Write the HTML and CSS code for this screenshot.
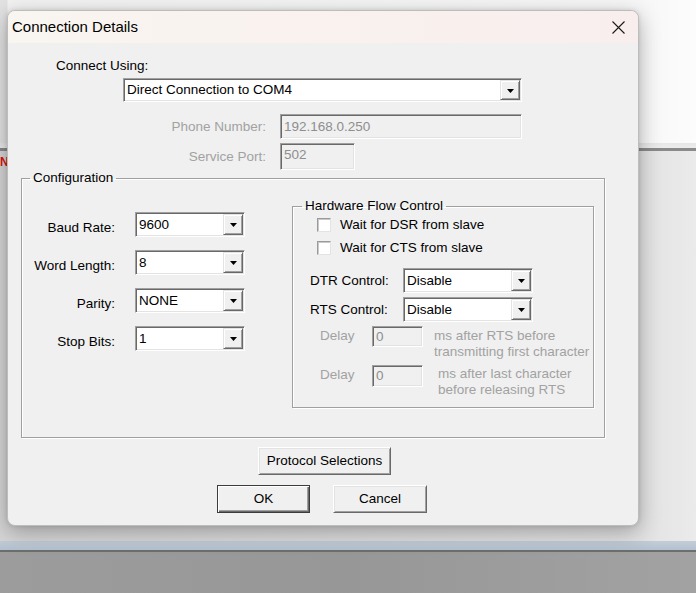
FILE: index.html
```html
<!DOCTYPE html>
<html lang="en">
<head>
<meta charset="utf-8">
<title>Connection Details</title>
<link rel="stylesheet" href="styles.css">
</head>
<body>
<div class="desktop">
  <div class="desk-top"></div>
  <div class="desk-rule-light"></div>
  <div class="desk-rule"></div>
  <div class="desk-mid"><span class="red-n">N</span></div>
  <div class="band"></div>
  <div class="band-rule"></div>
  <div class="desk-bottom"></div>
</div>

<div class="dialog">
  <div class="titlebar">
    <span class="title">Connection Details</span>
    <svg class="close" width="13" height="13" viewBox="0 0 13 13"><path d="M0.5 0.5 L12.5 12.5 M12.5 0.5 L0.5 12.5" stroke="#1a1a1a" stroke-width="1.1" fill="none"/></svg>
  </div>
  <div class="body">
    <div class="connect-label">Connect Using:</div>
    <div class="combo combo-connect">
      <span class="combo-text">Direct Connection to COM4</span>
      <span class="drop"><svg width="7" height="4" viewBox="0 0 7 4"><polygon points="0,0 7,0 3.5,4" fill="#000"/></svg></span>
    </div>

    <div class="field-row row-phone">
      <span class="field-label">Phone Number:</span>
      <div class="edit edit-phone">192.168.0.250</div>
    </div>
    <div class="field-row row-port">
      <span class="field-label">Service Port:</span>
      <div class="edit edit-port">502</div>
    </div>

    <fieldset class="group config">
      <legend>Configuration</legend>
      <div class="config-cols">
        <div class="serial-col">
          <div class="serial-row">
            <span class="serial-label">Baud Rate:</span>
            <div class="combo combo-serial"><span class="combo-text">9600</span><span class="drop"><svg width="7" height="4" viewBox="0 0 7 4"><polygon points="0,0 7,0 3.5,4" fill="#000"/></svg></span></div>
          </div>
          <div class="serial-row">
            <span class="serial-label">Word Length:</span>
            <div class="combo combo-serial"><span class="combo-text">8</span><span class="drop"><svg width="7" height="4" viewBox="0 0 7 4"><polygon points="0,0 7,0 3.5,4" fill="#000"/></svg></span></div>
          </div>
          <div class="serial-row">
            <span class="serial-label">Parity:</span>
            <div class="combo combo-serial"><span class="combo-text">NONE</span><span class="drop"><svg width="7" height="4" viewBox="0 0 7 4"><polygon points="0,0 7,0 3.5,4" fill="#000"/></svg></span></div>
          </div>
          <div class="serial-row">
            <span class="serial-label">Stop Bits:</span>
            <div class="combo combo-serial"><span class="combo-text">1</span><span class="drop"><svg width="7" height="4" viewBox="0 0 7 4"><polygon points="0,0 7,0 3.5,4" fill="#000"/></svg></span></div>
          </div>
        </div>

        <fieldset class="group hw">
          <legend>Hardware Flow Control</legend>
          <div class="check check-1"><span class="box"></span><span>Wait for DSR from slave</span></div>
          <div class="check check-2"><span class="box"></span><span>Wait for CTS from slave</span></div>

          <div class="ctl-row ctl-dtr">
            <span class="ctl-label">DTR Control:</span>
            <div class="combo combo-ctl"><span class="combo-text">Disable</span><span class="drop"><svg width="7" height="4" viewBox="0 0 7 4"><polygon points="0,0 7,0 3.5,4" fill="#000"/></svg></span></div>
          </div>
          <div class="ctl-row ctl-rts">
            <span class="ctl-label">RTS Control:</span>
            <div class="combo combo-ctl"><span class="combo-text">Disable</span><span class="drop"><svg width="7" height="4" viewBox="0 0 7 4"><polygon points="0,0 7,0 3.5,4" fill="#000"/></svg></span></div>
          </div>

          <div class="delay-row delay-1">
            <span class="delay-label">Delay</span>
            <div class="edit edit-delay">0</div>
            <div class="delay-text">ms after RTS before<br>transmitting first character</div>
          </div>
          <div class="delay-row delay-2">
            <span class="delay-label">Delay</span>
            <div class="edit edit-delay edit-delay-2">0</div>
            <div class="delay-text">ms after last character<br>before releasing RTS</div>
          </div>
        </fieldset>
      </div>
    </fieldset>

    <div class="btn-row row-protocol">
      <button class="btn btn-protocol" type="button">Protocol Selections</button>
    </div>
    <div class="btn-row row-ok">
      <button class="btn btn-ok" type="button">OK</button>
      <button class="btn btn-cancel" type="button">Cancel</button>
    </div>
  </div>
</div>
</body>
</html>
```

FILE: styles.css
```css
* { box-sizing: border-box; }

html, body {
  margin: 0;
  padding: 0;
  width: 696px;
  height: 593px;
  overflow: hidden;
}

body {
  font-family: "Liberation Sans", Arial, sans-serif;
  font-size: 13.5px;
  color: #000;
  background: #e8e8e8;
  position: relative;
}

/* ---------- desktop behind the dialog ---------- */
.desktop {
  display: flex;
  flex-direction: column;
  width: 696px;
  height: 593px;
}
.desk-top {
  height: 143px;
  background: linear-gradient(to right, #e2e2e2 0, #e2e2e2 7px, #f2f2f2 8px, #f7f7f7 640px, #fcfcfc 696px);
}
.desk-rule-light {
  height: 5px;
  background: linear-gradient(to bottom, #e6e6e6, #ededed);
}
.desk-rule {
  height: 3px;
  background: #8a8a8a;
}
.desk-mid {
  height: 390px;
  background: linear-gradient(to right, #d6d6d6 0, #d6d6d6 7px, #e2e2e2 640px, #ebebeb 696px);
  overflow: hidden;
}
.red-n {
  display: block;
  margin: 4px 0 0 0;
  font-family: "Liberation Sans", Arial, sans-serif;
  font-weight: bold;
  font-size: 12px;
  line-height: 14px;
  color: #e01010;
}
.band {
  height: 9px;
  background: linear-gradient(to bottom, #c3cdd8, #b4c1ce);
}
.band-rule {
  height: 2px;
  background: #6e6e6e;
}
.desk-bottom {
  flex: 1;
  background: linear-gradient(to right, #9c9c9c, #979797 50%, #a2a2a2);
}

/* ---------- dialog window ---------- */
.dialog {
  position: absolute;
  left: 7px;
  top: 10px;
  width: 632px;
  height: 516px;
  border: 1px solid #bdbdbd;
  border-radius: 8px;
  background: #f0f0f0;
  overflow: hidden;
  box-shadow: 0 6px 22px rgba(0, 0, 0, 0.3), 0 0 4px rgba(0, 0, 0, 0.12);
}

.titlebar {
  height: 32px;
  display: flex;
  align-items: center;
  justify-content: space-between;
  padding: 0 13px 0 4px;
  background: linear-gradient(to right, #f9f5f0, #f9f1ee 60%, #f8eeee);
}
.title {
  font-family: "Liberation Sans", Arial, sans-serif;
  font-size: 15px;
  line-height: 20px;
  color: #000;
}
.close { display: block; }

.body {
  height: 482px;
  white-space: nowrap;
}

/* ---------- classic 3D controls ---------- */
.combo,
.edit {
  border-style: solid;
  border-width: 1px;
  border-color: #a0a0a0 #ffffff #ffffff #a0a0a0;
  box-shadow: inset 1px 1px 0 #696969, inset -1px -1px 0 #e3e3e3;
}

.combo {
  display: flex;
  padding: 1px;
  background: #fff;
}
.combo-text {
  flex: 1;
  display: flex;
  align-items: center;
  padding-left: 2px;
  line-height: 18px;
}
.drop {
  width: 20px;
  display: flex;
  align-items: center;
  justify-content: center;
  background: #f0f0f0;
  border-style: solid;
  border-width: 1px;
  border-color: #e3e3e3 #696969 #696969 #e3e3e3;
  box-shadow: inset 1px 1px 0 #ffffff, inset -1px -1px 0 #a0a0a0;
}
.drop svg { display: block; margin-top: 1px; }

.edit {
  background: #f0f0f0;
  color: #8e8e8e;
  display: flex;
  align-items: center;
  padding-left: 3px;
  line-height: 18px;
}

/* ---------- top section ---------- */
.connect-label {
  margin: 14px 0 0 48px;
  line-height: 18px;
}
.combo-connect {
  margin: 3px 0 0 115px;
  width: 399px;
  height: 24px;
}
.field-row {
  display: flex;
  align-items: center;
}
.field-label {
  width: 258px;
  margin-right: 14px;
  text-align: right;
  color: #a2a2a2;
  line-height: 18px;
}
.row-phone { margin-top: 12px; }
.edit-phone { width: 242px; height: 25px; }
.row-port { margin-top: 4px; }
.edit-port {
  width: 75px;
  height: 27px;
  align-items: flex-start;
  padding-top: 2px;
}

/* ---------- group boxes ---------- */
.group {
  margin: 0;
  padding: 0;
  border: 1px solid #a0a0a0;
  box-shadow: 1px 1px 0 #ffffff, inset 1px 1px 0 #ffffff;
  min-width: 0;
}
.group > legend {
  padding: 0 3px;
  line-height: 16px;
  color: #000;
}

.config {
  margin-left: 13px;
  width: 584px;
  height: 268px;
}
.config > legend { margin-left: 8px; }

.config-cols {
  display: flex;
  align-items: flex-start;
}

.serial-col {
  margin-top: 26px;
  display: flex;
  flex-direction: column;
  gap: 13px;
}
.serial-row {
  display: flex;
  align-items: center;
}
.serial-label {
  width: 93px;
  margin-right: 20px;
  text-align: right;
  line-height: 18px;
  padding-top: 6px;
}
.combo-serial { width: 110px; height: 25px; }

.hw {
  margin: 12px 0 0 47px;
  width: 302px;
  height: 210px;
}
.hw > legend { margin-left: 9px; }

.check {
  display: flex;
  align-items: center;
  margin-left: 24px;
  line-height: 18px;
}
.check-1 { margin-top: 2px; }
.check-2 { margin-top: 5px; }
.box {
  width: 14px;
  height: 14px;
  margin-right: 9px;
  background: #fff;
  border-style: solid;
  border-width: 1px;
  border-color: #9a9a9a #e3e3e3 #e3e3e3 #9a9a9a;
  box-shadow: inset 1px 1px 0 #c9c9c9;
}

.ctl-row {
  display: flex;
  align-items: center;
  margin-left: 17px;
}
.ctl-dtr { margin-top: 11px; }
.ctl-rts { margin-top: 4px; }
.ctl-label {
  width: 93px;
  line-height: 18px;
}
.combo-ctl { width: 130px; height: 25px; }

.delay-row {
  display: flex;
  align-items: flex-start;
  margin-left: 27px;
  color: #a2a2a2;
}
.delay-1 { margin-top: 4px; }
.delay-2 { margin-top: 5px; }
.delay-label {
  width: 52px;
  line-height: 16px;
  margin-top: 2px;
}
.edit-delay {
  width: 51px;
  height: 21px;
  line-height: 16px;
}
.edit-delay-2 { height: 22px; }
.delay-text {
  line-height: 16px;
}
.delay-1 .delay-text { margin: 2px 0 0 11px; }
.delay-2 .delay-text { margin: 1px 0 0 15px; }

/* ---------- buttons ---------- */
.btn-row { display: flex; }
.row-protocol { margin: 9px 0 0 250px; }
.row-ok { margin: 10px 0 0 209px; gap: 23px; }

.btn {
  font: inherit;
  color: #000;
  margin: 0;
  padding: 0;
  height: 28px;
  line-height: 18px;
  white-space: nowrap;
  background: #f0f0f0;
  border-style: solid;
  border-width: 1px;
  border-color: #ffffff #696969 #696969 #ffffff;
  box-shadow: inset 1px 1px 0 #e3e3e3, inset -1px -1px 0 #a0a0a0;
  text-align: center;
}
.btn-protocol { width: 133px; }
.btn-ok {
  width: 93px;
  border-color: #3c3c3c;
  box-shadow: inset 1px 1px 0 #ffffff, inset -1px -1px 0 #696969, inset -2px -2px 0 #a0a0a0;
}
.btn-cancel { width: 94px; }
```
